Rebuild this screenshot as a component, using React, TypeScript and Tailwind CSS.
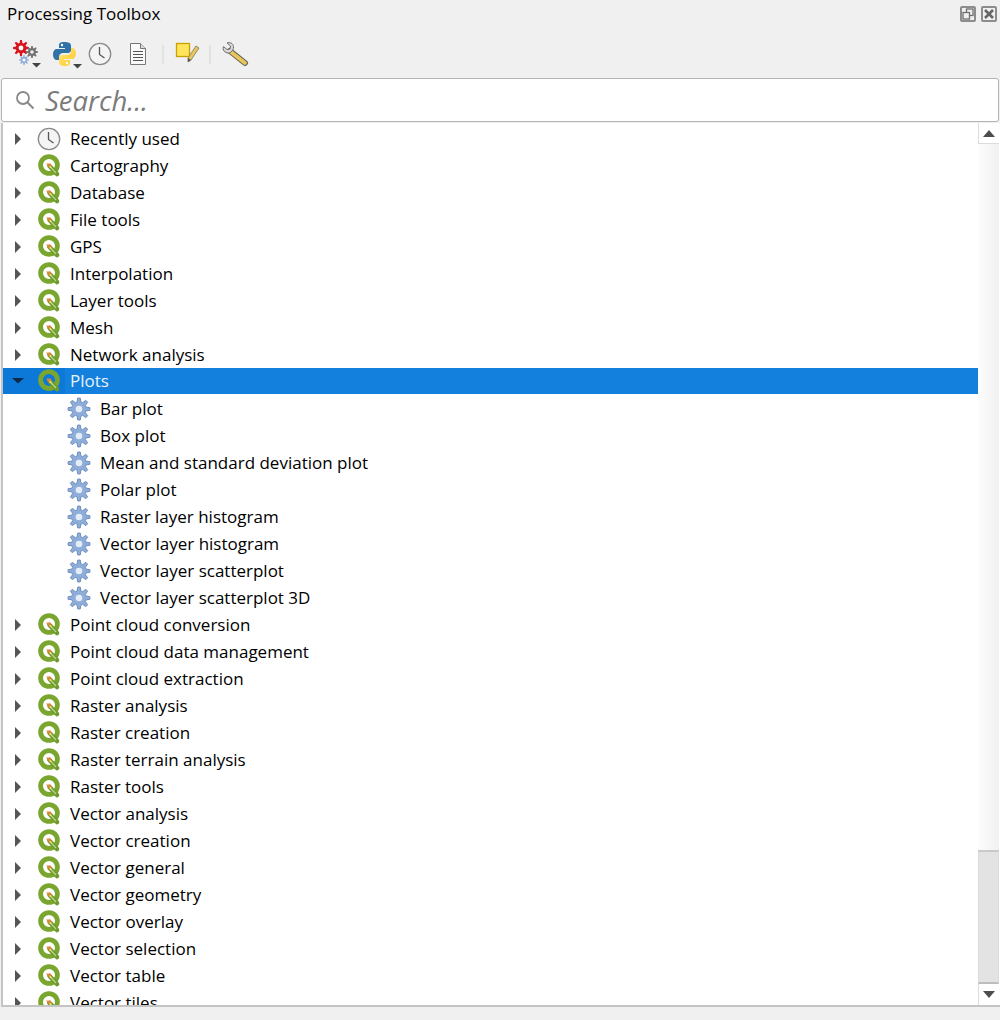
import { useId } from "react";

const TOP_GROUPS = [
  "Cartography",
  "Database",
  "File tools",
  "GPS",
  "Interpolation",
  "Layer tools",
  "Mesh",
  "Network analysis",
];

const PLOTS = [
  "Bar plot",
  "Box plot",
  "Mean and standard deviation plot",
  "Polar plot",
  "Raster layer histogram",
  "Vector layer histogram",
  "Vector layer scatterplot",
  "Vector layer scatterplot 3D",
];

const BOTTOM_GROUPS = [
  "Point cloud conversion",
  "Point cloud data management",
  "Point cloud extraction",
  "Raster analysis",
  "Raster creation",
  "Raster terrain analysis",
  "Raster tools",
  "Vector analysis",
  "Vector creation",
  "Vector general",
  "Vector geometry",
  "Vector overlay",
  "Vector selection",
  "Vector table",
  "Vector tiles",
];

function gearPath(cx: number, cy: number, outer: number, inner: number, teeth: number) {
  const pts: string[] = [];
  const step = (Math.PI * 2) / teeth;
  for (let i = 0; i < teeth; i++) {
    const a = i * step - Math.PI / 2;
    const corners: [number, number][] = [
      [a - step * 0.34, inner],
      [a - step * 0.15, outer],
      [a + step * 0.15, outer],
      [a + step * 0.34, inner],
    ];
    corners.forEach(([ang, r]) => {
      pts.push(`${(cx + Math.cos(ang) * r).toFixed(2)},${(cy + Math.sin(ang) * r).toFixed(2)}`);
    });
  }
  return `M${pts.join("L")}Z`;
}

function Gear({
  cx,
  cy,
  r,
  fill,
  stroke,
  hole = "#fff",
}: {
  cx: number;
  cy: number;
  r: number;
  fill: string;
  stroke?: string;
  hole?: string;
}) {
  return (
    <>
      <path d={gearPath(cx, cy, r, r * 0.66, 8)} fill={fill} stroke={stroke} strokeWidth={stroke ? 1 : 0} />
      <circle cx={cx} cy={cy} r={r * 0.3} fill={hole} />
    </>
  );
}

function ClockIcon({ size = 24 }: { size?: number }) {
  return (
    <svg width={size} height={size} viewBox="0 0 24 24" className="shrink-0">
      <circle cx="12" cy="12" r="10.7" fill="#f4f4f4" stroke="#8a8a8a" strokeWidth="1.3" />
      <path d="M11.5 5v7.5l5 3.5" fill="none" stroke="#555" strokeWidth="1.3" />
    </svg>
  );
}

function QgisIcon() {
  return (
    <svg width="24" height="24" viewBox="0 0 24 24" className="shrink-0">
      <circle cx="12" cy="11" r="8.400" fill="none" stroke="#7aa62f" strokeWidth="4.800" />
      <path d="M12.500 12l7.500 8" stroke="#6f9a2c" strokeWidth="4.600" strokeLinecap="round" />
      <path d="M13 12.500l6 6.500" stroke="#bcd58c" strokeWidth="1.200" />
      <path d="M9 9.500l5 .2-.8 4.800z" fill="#e8843a" />
      <circle cx="13.500" cy="13" r="1" fill="#f7e36a" />
    </svg>
  );
}

function ExpandArrow({ open }: { open?: boolean }) {
  return (
    <svg width="12" height="12" viewBox="0 0 12 12" className="shrink-0">
      {open ? <path d="M0 3h12L6 8.500z" fill="#0e2a4a" /> : <path d="M3 0l6 6-6 6z" fill="#555" />}
    </svg>
  );
}

function GroupRow({ label, open, icon }: { label: string; open?: boolean; icon?: "clock" }) {
  return (
    <div className={`flex h-[27px] shrink-0 items-center pl-[9px] ${open ? "border-b border-white bg-[#0c79d8]" : ""}`}>
      <ExpandArrow open={open} />
      <div className="ml-[13px] flex h-full w-[28px] items-center">
        {icon === "clock" ? <ClockIcon /> : <QgisIcon />}
      </div>
      <span className={`flex h-full flex-1 items-center pl-[5px] ${open ? "bg-[#1280dc] text-[#e8f2fb]" : ""}`}>
        {label}
      </span>
    </div>
  );
}

function AlgorithmRow({ label }: { label: string }) {
  return (
    <div className="flex h-[27px] shrink-0 items-center pl-[64px]">
      <svg width="24" height="24" viewBox="0 0 24 24" className="shrink-0">
        <Gear cx={12} cy={12} r={11} fill="#8fadd9" stroke="#6f8fbf" hole="#e4ecf8" />
      </svg>
      <span className="ml-[9px]">{label}</span>
    </div>
  );
}

function Toolbar() {
  const gradId = useId();
  return (
    <div className="flex h-[44px] shrink-0 items-center pl-[12px]">
      <svg width="30" height="30" viewBox="0 0 30 30" className="shrink-0">
        <Gear cx={9} cy={9} r={8} fill="#d8141c" />
        <Gear cx={20} cy={13} r={6} fill="#6f6f6f" hole="#efefef" />
        <Gear cx={12} cy={21} r={5} fill="#8fadd9" />
        <path d="M20 24h9l-4.500 4.500z" fill="#444" />
      </svg>
      <svg width="30" height="30" viewBox="0 0 30 30" className="ml-[10px] shrink-0">
        <defs>
          <linearGradient id={gradId} x1="0" y1="0" x2="1" y2="1">
            <stop offset="0" stopColor="#ffe873" />
            <stop offset="1" stopColor="#ffc72e" />
          </linearGradient>
        </defs>
        <path
          d="M12 3c-4 0-5 1.500-5 3.500V9h6v1H5c-2.500 0-4 2-4 5.500S2.500 21 5 21h2v-3c0-2.500 2-4 4-4h5c2 0 3-1.500 3-3V6.500C19 4 16.500 3 12 3z"
          fill="#2f72a8"
        />
        <path
          d="M13 27c4 0 5-1.500 5-3.500V21h-6v-1h8c2.500 0 4-2 4-5.500S22.500 9 20 9h-1v3c0 2.500-2 4-4 4h-5c-2 0-3 1.500-3 3v4.500C7 26 9.500 27 13 27z"
          fill={`url(#${gradId})`}
        />
        <circle cx="10" cy="6" r="1.200" fill="#fff" />
        <circle cx="15" cy="24" r="1.200" fill="#fff" />
        <path d="M21 25h9l-4.500 4.500z" fill="#444" />
      </svg>
      <span className="ml-[6px] flex w-[24px] justify-center">
        <ClockIcon />
      </span>
      <svg width="22" height="24" viewBox="0 0 22 24" className="ml-[15px] shrink-0">
        <path d="M3.500 1.500h10l5 5v16h-15z" fill="#fafafa" stroke="#777" />
        <path d="M13.500 1.500v5h5" fill="#ddd" stroke="#777" />
        <path d="M6 9.500h10M6 12.500h10M6 15.500h10M6 18.500h10" stroke="#555" />
      </svg>
      <div className="ml-[13px] h-[19px] w-[2px] bg-[#e2e2e2]" />
      <svg width="26" height="26" viewBox="0 0 26 26" className="ml-[11px] shrink-0">
        <rect x="1.500" y="2.500" width="13" height="13" fill="#ffe45c" stroke="#c8a200" strokeWidth="1.300" />
        <path d="M21 5l3 2-8 12-3 2 0-4z" fill="#e8c85a" stroke="#8d8d6a" />
        <path d="M13 17l3 2-3 2z" fill="#555" />
      </svg>
      <div className="ml-[8px] h-[19px] w-[2px] bg-[#e2e2e2]" />
      <svg width="28" height="26" viewBox="0 0 28 26" className="ml-[10px] shrink-0">
        <path d="M9 10l15 12" stroke="#6b6b5a" strokeWidth="6" strokeLinecap="round" />
        <path d="M10 11l14 11" stroke="#e8c65c" strokeWidth="3.600" strokeLinecap="round" />
        <path
          d="M2.500 5.500L6 8.500l3-.5.500-3L6 2c3-1.200 6 .3 6.500 3.500.2 1.500-.2 2.500-.7 3.500L9.500 11.500c-1.500.7-3 .7-4.500 0-2.500-1.200-3.500-3.500-2.500-6z"
          fill="#d9d9d9"
          stroke="#6d6d6d"
        />
      </svg>
    </div>
  );
}

function TitleButton({ kind }: { kind: "float" | "close" }) {
  return (
    <div className="flex h-[16px] w-[16px] items-center justify-center rounded-[2px] border-2 border-[#8c8c8c] bg-[#f0f0f0]">
      <svg width="12" height="12" viewBox="0 0 12 12">
        {kind === "float" ? (
          <>
            <rect x="4.500" y="1" width="6.500" height="6.500" fill="none" stroke="#6f6f6f" strokeWidth="1.300" />
            <rect x="1" y="4.500" width="6.500" height="6.500" fill="#f0f0f0" stroke="#6f6f6f" strokeWidth="1.300" />
          </>
        ) : (
          <path d="M2 2l8 8M10 2l-8 8" stroke="#666" strokeWidth="2.600" />
        )}
      </svg>
    </div>
  );
}

function Scrollbar() {
  return (
    <div className="flex w-[21px] shrink-0 flex-col bg-gradient-to-r from-[#fdfdfd] to-[#f1f1f1]">
      <div className="flex h-[21px] shrink-0 items-center justify-center border-b border-l border-[#dcdcdc] bg-white">
        <svg width="12" height="7" viewBox="0 0 12 7">
          <path d="M0 7L6 0l6 7z" fill="#4d4d4d" />
        </svg>
      </div>
      <div className="flex-1" />
      <div className="h-[134px] shrink-0 border-x border-t-2 border-b-2 border-x-[#dadada] border-t-[#c9c9c9] border-b-[#bdbdbd] bg-[#e3e3e3]" />
      <div className="flex h-[21px] shrink-0 items-center justify-center border-l border-[#dcdcdc] bg-white">
        <svg width="12" height="7" viewBox="0 0 12 7">
          <path d="M0 0l6 7 6-7z" fill="#4d4d4d" />
        </svg>
      </div>
    </div>
  );
}

export default function App() {
  return (
    <div className="flex h-[1020px] w-[1000px] flex-col overflow-hidden bg-[#f0f0f0] text-[17px] text-[#000] [font-family:'Open_Sans','Noto_Sans',sans-serif]">
      <div className="flex h-[32px] shrink-0 items-center justify-between pb-[4px] pl-[7px] pr-[3px]">
        <span>Processing Toolbox</span>
        <div className="flex gap-[5px]">
          <TitleButton kind="float" />
          <TitleButton kind="close" />
        </div>
      </div>

      <Toolbar />

      <div className="mx-[1px] mb-[1px] mt-[2px] flex h-[44px] shrink-0 items-center rounded-[3px] border border-[#b4b4b4] bg-white pl-[13px]">
        <svg width="20" height="20" viewBox="0 0 20 20" className="shrink-0">
          <circle cx="8" cy="8" r="6" fill="none" stroke="#8a8a8a" strokeWidth="1.800" />
          <path d="M12.500 12.500l6 6" stroke="#8a8a8a" strokeWidth="2" />
        </svg>
        <span className="ml-[10px] pt-[2px] text-[27.5px] italic text-[#7b7b7b]">Search...</span>
      </div>

      <div className="mb-[13px] ml-[1px] flex min-h-0 flex-1 border-b-2 border-l-2 border-[#c4c4c4] bg-white pr-[1px]">
        <div className="flex min-w-0 flex-1 flex-col overflow-hidden pt-[2px]">
          <GroupRow label="Recently used" icon="clock" />
          {TOP_GROUPS.map((g) => (
            <GroupRow key={g} label={g} />
          ))}
          <GroupRow label="Plots" open />
          {PLOTS.map((p) => (
            <AlgorithmRow key={p} label={p} />
          ))}
          {BOTTOM_GROUPS.map((g) => (
            <GroupRow key={g} label={g} />
          ))}
        </div>
        <Scrollbar />
      </div>
    </div>
  );
}
